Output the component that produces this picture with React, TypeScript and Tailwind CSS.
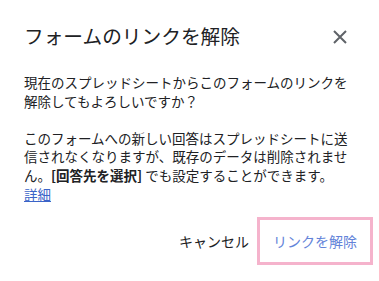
import React from "react";

export default function App() {
  const font = { fontFamily: '"Noto Sans CJK JP", "Noto Sans", sans-serif' };
  return (
    <div
      className="w-[379px] h-[281px] bg-white overflow-hidden text-[#202124]"
      style={font}
    >
      <div className="flex items-center justify-between pl-6 pr-[32px] pt-[24px] h-[48px]">
        <div className="text-[19.7px] leading-[24px] text-[#202124]">
          フォームのリンクを解除
        </div>
        <svg width="14" height="14" viewBox="0 0 14 14" className="mt-[2px]">
          <path d="M1 1L13 13M13 1L1 13" stroke="#5f6368" strokeWidth="2" />
        </svg>
      </div>
      <div className="px-6 pt-[25px] text-[13.5px] leading-[18.6px] text-[#202124] whitespace-nowrap">
        <p>
          現在のスプレッドシートからこのフォームのリンクを
          <br />
          解除してもよろしいですか？
        </p>
        <p className="mt-[18.6px]">
          このフォームへの新しい回答はスプレッドシートに送
          <br />
          信されなくなりますが、既存のデータは削除されませ
          <br />
          ん。<b className="font-bold">[回答先を選択]</b> でも設定することができます。
          <br />
          <a className="text-[#3b64c8] underline">詳細</a>
        </p>
      </div>
      <div className="flex items-center justify-end pr-[6px] mt-[14px]">
        <button className="text-[14px] leading-[20px] text-[#202124] px-[8px] h-[48px]">
          キャンセル
        </button>
        <button className="text-[14px] leading-[20px] text-[#6383d9] border-[3px] border-[#f5b3cc] h-[48px] w-[116px]">
          リンクを解除
        </button>
      </div>
    </div>
  );
}
